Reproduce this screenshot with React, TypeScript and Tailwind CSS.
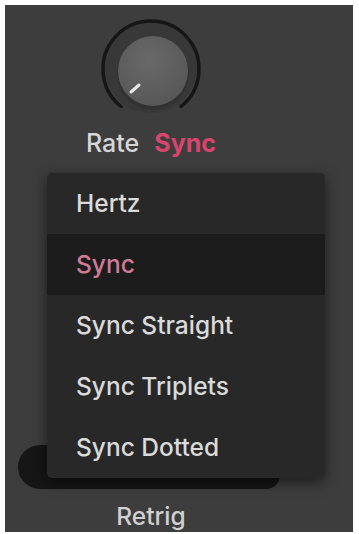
import React, { useState } from "react";

const options = ["Hertz", "Sync", "Sync Straight", "Sync Triplets", "Sync Dotted"];

const Knob: React.FC = () => (
  <svg width="104" height="104" viewBox="0 0 104 104" className="block">
    <defs>
      <radialGradient id="knobFill" cx="45%" cy="35%" r="70%">
        <stop offset="0%" stopColor="#696969" />
        <stop offset="100%" stopColor="#565656" />
      </radialGradient>
    </defs>
    <circle cx="52" cy="52" r="46" fill="#383838" />
    <path d="M22 91.5 A48 48 0 1 1 82 91.5" fill="none" stroke="#161616" strokeWidth="3.5" strokeLinecap="round" />
    <circle cx="54" cy="59" r="36" fill="#2e2e2e" opacity="0.6" />
    <circle cx="54" cy="56" r="35" fill="url(#knobFill)" />
    <line x1="32" y1="77" x2="40" y2="70" stroke="#e6e6e6" strokeWidth="3" strokeLinecap="round" />
  </svg>
);

const App: React.FC = () => {
  const [mode, setMode] = useState("Sync");

  return (
    <div className="w-[359px] h-[534px] bg-white pt-[5px] pl-[5px] pr-[6px] pb-[2px]" style={{ fontFamily: "Inter, 'Liberation Sans', sans-serif" }}>
      <div className="relative h-full bg-[#3d3d3d] flex flex-col">
        {/* knob + label */}
        <div className="w-[292px] flex flex-col items-center pt-[10px]">
          <Knob />
          <div className="mt-[12px] flex items-baseline gap-[15px] text-[25px] leading-none">
            <span className="font-medium text-[#d6d6d6]">Rate</span>
            <span className="font-bold text-[#d8446c]">{mode}</span>
          </div>
        </div>

        <div className="flex-1" />

        {/* retrig toggle behind menu */}
        <div className="ml-[13px] w-[262px] h-[44px] rounded-l-[22px] rounded-r-[14px] bg-[#161616]" />
        <div className="w-[292px] flex justify-center mt-[15px] mb-[4px]">
          <span className="text-[24.5px] leading-none font-medium text-[#d0d0d0]">Retrig</span>
        </div>

        {/* dropdown menu */}
        <div className="absolute left-[42px] top-[168px] w-[278px] rounded-[5px] bg-[#282828] shadow-[0_4px_14px_rgba(0,0,0,0.55)] overflow-hidden">
          {options.map((opt) => {
            const active = opt === mode;
            return (
              <button
                key={opt}
                onClick={() => setMode(opt)}
                className={`w-full h-[61px] flex items-center pl-[29px] text-left text-[24.5px] font-medium ${
                  active ? "bg-[#1c1c1c] text-[#cf7b96]" : "text-[#dadada]"
                }`}
              >
                {opt}
              </button>
            );
          })}
        </div>
      </div>
    </div>
  );
};

export default App;
